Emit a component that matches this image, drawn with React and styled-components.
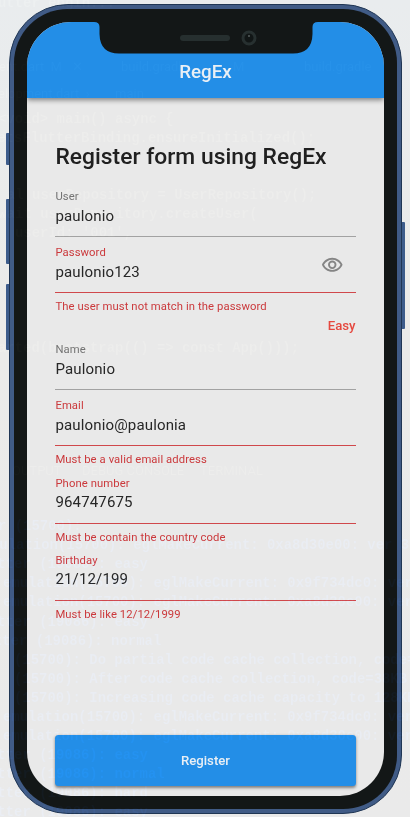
import React from "react";
import styled, { createGlobalStyle, css } from "styled-components";

const Global = createGlobalStyle`
  * { box-sizing: border-box; }
  html, body { margin: 0; background: #eaebec; }
  body { font-family: Roboto, "Liberation Sans", sans-serif; }
`;

const Stage = styled.main`
  position: relative;
  width: 410px;
  height: 817px;
  padding: 4px 8px 0 9px;
  overflow: hidden;
  background: linear-gradient(#e9ecee, #ebebe9 40%, #eaeaea);
`;

const Phone = styled.section`
  position: relative;
  width: 393px;
  height: 810px;
  padding: 4px;
  border: 1px solid #203654;
  border-radius: 59px;
  background: #405b86;
`;

const SideKey = styled.i`
  position: absolute;
  top: ${(p) => p.$top}px;
  ${(p) => (p.$right ? "right: -4px;" : "left: -4px;")}
  width: 3px;
  height: ${(p) => p.$height}px;
  border-radius: ${(p) => (p.$right ? "0 1px 1px 0" : "1px 0 0 1px")};
  background: #3d5c8b;
`;

const Bezel = styled.div`
  height: 100%;
  padding: 12.5px 13px 13px;
  border-radius: 54px;
  background: #131717;
`;

const Screen = styled.div`
  position: relative;
  display: flex;
  flex-direction: column;
  height: 100%;
  overflow: hidden;
  border-radius: 44px;
  background: #e9e9e9;
`;

const AppBar = styled.header`
  flex: none;
  height: 76.5px;
  padding-top: 39px;
  text-align: center;
  color: #e9eff5;
  background: #238ee7;
  box-shadow: 0 2px 5px rgba(0, 0, 0, 0.45);
`;

const BarTitle = styled.h1`
  margin: 0;
  font-size: 18.8px;
  line-height: 22px;
  font-weight: 500;
`;

const Notch = styled.svg`
  position: absolute;
  top: -1px;
  left: 67px;
  width: 224px;
  height: 34px;
`;

const Form = styled.form`
  flex: 1;
  display: flex;
  flex-direction: column;
  padding: 42.5px 28.5px 10.5px 28.4px;
`;

const Heading = styled.h2`
  margin: 0 0 8px;
  font-size: 22.8px;
  line-height: 32px;
  font-weight: 500;
  letter-spacing: 0.03px;
  white-space: nowrap;
  color: #202020;
`;

const FieldBox = styled.div`
  flex: none;
`;

const Control = styled.label`
  display: flex;
  justify-content: space-between;
  align-items: center;
  height: 56.4px;
  padding-top: 9.5px;
  border-bottom: 1px solid ${(p) => (p.$invalid ? "#d0484b" : "#a2a2a2")};
`;

const Stack = styled.span`
  display: flex;
  flex-direction: column;
  align-self: flex-start;
`;

const caption = css`
  font-size: 11.28px;
  line-height: 14px;
  letter-spacing: 0.09px;
`;

const Label = styled.span`
  ${caption}
  color: ${(p) => (p.$invalid ? "#cb393c" : "#737373")};
`;

const Value = styled.span`
  margin-top: 1.5px;
  font-size: 15.04px;
  line-height: 20px;
  letter-spacing: 0.14px;
  color: #272727;
`;

const ErrorText = styled.p`
  ${caption}
  height: 20.8px;
  margin: 0;
  padding-top: 7px;
  color: #cb393c;
`;

const Strength = styled.p`
  height: 19.5px;
  margin: 0;
  padding-top: 3px;
  font-size: 13.2px;
  line-height: 17px;
  font-weight: 500;
  text-align: right;
  color: #e5483f;
`;

const Eye = styled.svg`
  width: 22.5px;
  height: 22.5px;
  margin: 0 12px 9px 0;
  fill: #858585;
`;

const Submit = styled.button`
  height: 51px;
  margin-top: auto;
  border: 0;
  border-radius: 3.5px;
  font: 500 13.2px Roboto, "Liberation Sans", sans-serif;
  color: #e9eff5;
  background: #238ee7;
  box-shadow: 0 1.5px 3px rgba(0, 0, 0, 0.45);
`;

/* Faint editor text showing through the translucent window. */
const Backdrop = styled.div`
  position: absolute;
  inset: 0;
  overflow: hidden;
  pointer-events: none;
  mix-blend-mode: plus-lighter;
`;

const GhostLine = styled.span`
  position: absolute;
  left: ${(p) => p.$x}px;
  top: ${(p) => p.$y - 9}px;
  font: ${(p) => (p.$ui ? '13px Roboto, "Liberation Sans", sans-serif' : 'bold 13.95px "Liberation Mono", monospace')};
  line-height: 18px;
  white-space: pre;
  color: ${(p) => (p.$log ? "#01040a" : "#040403")};
`;

const ghosts = [
  { x: -2, y: 3, text: "utter_engin..." },
  { x: -1, y: 67, text: "ent.dart  M   ✕", ui: true },
  { x: 121, y: 67, text: "build.gradle", ui: true },
  { x: 233, y: 67, text: "M", ui: true },
  { x: 304, y: 67, text: "build.gradle", ui: true },
  { x: -2, y: 94, text: "elopment.dart  ›", ui: true },
  { x: 115, y: 94, text: "main", ui: true },
  { x: -2, y: 119, text: "<void> main() async {" },
  { x: -11, y: 138, text: "getsFlutterBinding.ensureInitialized();" },
  { x: 7, y: 195, text: "al userRepository = UserRepository();" },
  { x: -10, y: 214, text: "await userRepository.createUser(" },
  { x: 15, y: 233, text: "userId: '001'," },
  { x: -2, y: 348, text: "arted(bootstrap(() => const App()));" },
  { x: 12, y: 471, text: "OUTPUT", ui: true },
  { x: 82, y: 471, text: "DEBUG CONSOLE", ui: true },
  { x: 200, y: 471, text: "TERMINAL", ui: true },
  { x: -2, y: 526, text: "r (15700):", log: true },
  { x: -9, y: 545, text: "mulation(15700): eglMakeCurrent: 0xa8d30e00: ver 3", log: true },
  { x: -11, y: 564, text: "utter (19086): easy", log: true },
  { x: 3, y: 583, text: "emulation(15700): eglMakeCurrent: 0x9f734dc0: ver", log: true },
  { x: 3, y: 602, text: "emulation(15700): eglMakeCurrent: 0xa8d30e00: ver", log: true },
  { x: -11, y: 622, text: "utter (19086): easy", log: true },
  { x: -6, y: 641, text: "tter (19086): normal", log: true },
  { x: 14, y: 660, text: "(15700): Do partial code cache collection, code=", log: true },
  { x: 14, y: 679, text: "(15700): After code cache collection, code=38KB", log: true },
  { x: 14, y: 698, text: "(15700): Increasing code cache capacity to 128KB", log: true },
  { x: 3, y: 717, text: "emulation(15700): eglMakeCurrent: 0x9f734dc0: ver", log: true },
  { x: 3, y: 736, text: "emulation(15700): eglMakeCurrent: 0xa8d30e00: ver", log: true },
  { x: -11, y: 755, text: "utter (19086): easy", log: true },
  { x: -11, y: 774, text: "utter (19086): normal", log: true },
  { x: -11, y: 793, text: "utter (19086): hard", log: true },
  { x: -11, y: 812, text: "utter (19086): easy", log: true },
];

const fields = [
  { label: "User", value: "paulonio" },
  { label: "Password", value: "paulonio123", error: "The user must not match in the password", secret: true, strength: "Easy" },
  { label: "Name", value: "Paulonio" },
  { label: "Email", value: "paulonio@paulonia", error: "Must be a valid email address" },
  { label: "Phone number", value: "964747675", error: "Must be contain the country code" },
  { label: "Birthday", value: "21/12/199", error: "Must be like 12/12/1999" },
];

function Field({ label, value, error, secret, strength }) {
  return (
    <FieldBox>
      <Control $invalid={!!error}>
        <Stack>
          <Label $invalid={!!error}>{label}</Label>
          <Value>{value}</Value>
        </Stack>
        {secret && (
          <Eye viewBox="0 0 24 24">
            <path d="M12 6c3.79 0 7.17 2.13 8.82 5.5C19.17 14.87 15.79 17 12 17s-7.17-2.13-8.82-5.5C4.83 8.13 8.21 6 12 6m0-2C7 4 2.73 7.11 1 11.5 2.73 15.89 7 19 12 19s9.27-3.11 11-7.5C21.27 7.11 17 4 12 4zm0 5a2.5 2.5 0 0 1 0 5 2.5 2.5 0 0 1 0-5m0-2a4.5 4.5 0 1 0 0 9 4.5 4.5 0 0 0 0-9z" />
          </Eye>
        )}
      </Control>
      {error && <ErrorText>{error}</ErrorText>}
      {strength && <Strength>{strength}</Strength>}
    </FieldBox>
  );
}

export default function App() {
  return (
    <Stage>
      <Global />
      <Phone>
        <SideKey $top={128} $height={32} />
        <SideKey $top={194} $height={65} />
        <SideKey $top={279} $height={66} />
        <SideKey $top={217} $height={107} $right />
        <Bezel>
          <Screen>
            <AppBar>
              <BarTitle>RegEx</BarTitle>
            </AppBar>
            <Notch viewBox="0 0 224 34">
              <path d="M0 0V1Q5.5 1 5.5 6V13Q6 32.5 25 32.5H199Q218 32.5 218.500 13V6Q218.500 1 224 1V0Z" fill="#131717" />
              <rect x="86" y="14" width="50" height="6" rx="3" fill="#262f2f" />
              <circle cx="155" cy="17" r="6" fill="#111616" stroke="#273030" strokeWidth="3" />
              <circle cx="155" cy="15" r="0.8" fill="#899191" />
            </Notch>
            <Form>
              <Heading>Register form using RegEx</Heading>
              {fields.map((f) => (
                <Field key={f.label} {...f} />
              ))}
              <Submit type="button">Register</Submit>
            </Form>
          </Screen>
        </Bezel>
      </Phone>
      <Backdrop aria-hidden="true">
        {ghosts.map((g) => (
          <GhostLine key={g.x + "-" + g.y} $x={g.x} $y={g.y} $ui={g.ui} $log={g.log}>
            {g.text}
          </GhostLine>
        ))}
      </Backdrop>
    </Stage>
  );
}
